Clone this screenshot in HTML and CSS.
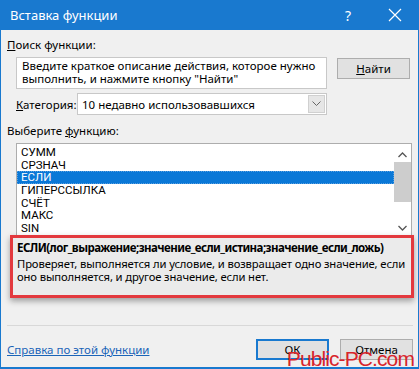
FILE: index.html
```html
<!DOCTYPE html>
<html lang="ru">
<head>
<meta charset="utf-8">
<title>Вставка функции</title>
<link rel="stylesheet" href="styles.css">
</head>
<body>
<div class="dialog">
  <div class="titlebar">
    <span class="title">Вставка функции</span>
    <span class="help">?</span>
    <svg class="close" width="14" height="14" viewBox="0 0 14 14"><path d="M1 1 L13 13 M13 1 L1 13" stroke="#fff" stroke-width="1.2" fill="none"/></svg>
  </div>
  <div class="body">
    <div class="label"><u>П</u>оиск функции:</div>
    <div class="search-row">
      <div class="textarea">Введите краткое описание действия, которое нужно<br>выполнить, и нажмите кнопку "Найти"</div>
      <div class="btn find"><u>Н</u>айти</div>
    </div>
    <div class="cat-row">
      <span class="cat-label"><u>К</u>атегория:</span>
      <div class="select">
        <span class="select-text">10 недавно использовавшихся</span>
        <span class="arrow"><svg width="9" height="6" viewBox="0 0 9 6"><path d="M0.5 0.5 L4.5 4.5 L8.5 0.5" stroke="#666" stroke-width="1" fill="none"/></svg></span>
      </div>
    </div>
    <div class="label label2">Выберите <u>ф</u>ункцию:</div>
    <div class="list">
      <div class="items">
        <div class="item">СУММ</div>
        <div class="item">СРЗНАЧ</div>
        <div class="item selected">ЕСЛИ</div>
        <div class="item">ГИПЕРССЫЛКА</div>
        <div class="item">СЧЁТ</div>
        <div class="item">МАКС</div>
        <div class="item">SIN</div>
      </div>
      <div class="scrollbar">
        <svg class="sb-up" width="9" height="6" viewBox="0 0 9 6"><path d="M0.5 5 L4.5 1 L8.5 5" stroke="#555" stroke-width="1.3" fill="none"/></svg>
        <div class="thumb"></div>
        <svg class="sb-down" width="9" height="6" viewBox="0 0 9 6"><path d="M0.5 1 L4.5 5 L8.5 1" stroke="#555" stroke-width="1.3" fill="none"/></svg>
      </div>
    </div>
    <div class="desc">
      <div class="syntax">ЕСЛИ(лог_выражение;значение_если_истина;значение_если_ложь)</div>
      <div class="text">Проверяет, выполняется ли условие, и возвращает одно значение, если<br>оно выполняется, и другое значение, если нет.</div>
    </div>
    <div class="separator"></div>
    <div class="bottom-row">
      <a class="link" href="#">Справка по этой функции</a>
      <div class="btn ok">ОК</div>
      <div class="btn cancel">Отмена</div>
    </div>
  </div>
  <div class="watermark">Public-PC.com</div>
</div>
</body>
</html>
```
FILE: styles.css
```css
* { box-sizing: border-box; }
body {
  margin: 0;
  font-family: "Noto Sans", "Open Sans", sans-serif;
  font-size: 11.5px;
  color: #000;
}
.dialog {
  position: relative;
  width: 419px;
  height: 369px;
  background: #f0f0f0;
  border: 1px solid #1979cf;
  border-top: none;
  border-bottom-width: 2px;
  overflow: hidden;
}
.titlebar {
  height: 30px;
  margin: 0 -1px;
  background: #1979cf;
  color: #fff;
  display: flex;
  align-items: center;
  padding-left: 10px;
}
.title { font-size: 13px; flex: 1; }
.help { font-size: 14px; margin-right: 37px; }
.close { margin-right: 17px; }
.body {
  padding: 0 5px 0 6px;
  display: flex;
  flex-direction: column;
}
.label { line-height: 16px; margin-top: 7px; }
.label2 { margin-top: 8px; }
.search-row {
  display: flex;
  margin-top: 4px;
  padding-left: 9px;
}
.textarea {
  width: 311px;
  height: 32px;
  background: #fff;
  border: 1px solid #c8c8c8;
  padding: 2px 5px;
  line-height: 12.5px;
}
.btn {
  height: 21px;
  background: #e1e1e1;
  border: 1px solid #adadad;
  display: flex;
  align-items: center;
  justify-content: center;
}
.find { width: 73px; margin-left: 10px; margin-top: 1px; }
.cat-row {
  display: flex;
  align-items: center;
  margin-top: 4px;
  padding-left: 9px;
}
.cat-label { width: 61px; flex-shrink: 0; }
.select {
  width: 250px;
  height: 22px;
  background: #fff;
  border: 1px solid #c8c8c8;
  display: flex;
  align-items: center;
  padding-left: 4px;
}
.select-text { flex: 1; }
.arrow {
  width: 17px;
  height: 18px;
  margin-right: 1px;
  background: #e6e6e6;
  border: 1px solid #d0d0d0;
  display: flex;
  align-items: center;
  justify-content: center;
}
.list {
  margin-top: 4px;
  margin-left: 9px;
  width: 396px;
  height: 92px;
  background: #fff;
  border: 1px solid #adadad;
  border-bottom: none;
  display: flex;
}
.items { flex: 1; padding-top: 2px; }
.item {
  height: 12.7px;
  line-height: 12.7px;
  padding-left: 4px;
  font-family: Roboto, "Noto Sans", sans-serif;
  font-size: 11.5px;
}
.selected { background: #0a78d7; color: #fff; outline: 1px dotted #5aa0e0; outline-offset: -1px; }
.scrollbar {
  width: 17px;
  display: flex;
  flex-direction: column;
  align-items: center;
}
.sb-up { margin-top: 8px; }
.thumb { width: 17px; height: 40px; background: #cdcdcd; margin-top: 4px; }
.sb-down { margin-top: 23px; }
.desc {
  margin-left: 3px;
  width: 404px;
  height: 63px;
  border: 3px solid #e3393e;
  background: #ebebeb;
  box-shadow: 0 3px 6px rgba(0,0,0,0.35);
  padding: 2px 0 0 4px;
  white-space: nowrap;
}
.syntax { font-weight: bold; line-height: 16px; font-size: 11.5px; letter-spacing: -0.55px; }
.text { line-height: 12.5px; margin-top: 2px; font-size: 11.25px; letter-spacing: -0.12px; }
.separator {
  height: 1px;
  background: #d8d8d8;
  margin-top: 27px;
}
.bottom-row {
  display: flex;
  align-items: center;
  margin-top: 13px;
}
.link {
  flex: 1;
  color: #1a64b8;
  text-decoration: underline;
}
.ok {
  width: 73px;
  border: 2px solid #1979cf;
}
.cancel { width: 73px; margin-left: 11px; }
.watermark {
  position: absolute;
  right: 4px;
  bottom: -2px;
  color: #d8242b;
  font-family: "Liberation Sans", Arial, sans-serif;
  font-size: 21px;
  line-height: 21px;
  letter-spacing: -0.9px;
}
```
